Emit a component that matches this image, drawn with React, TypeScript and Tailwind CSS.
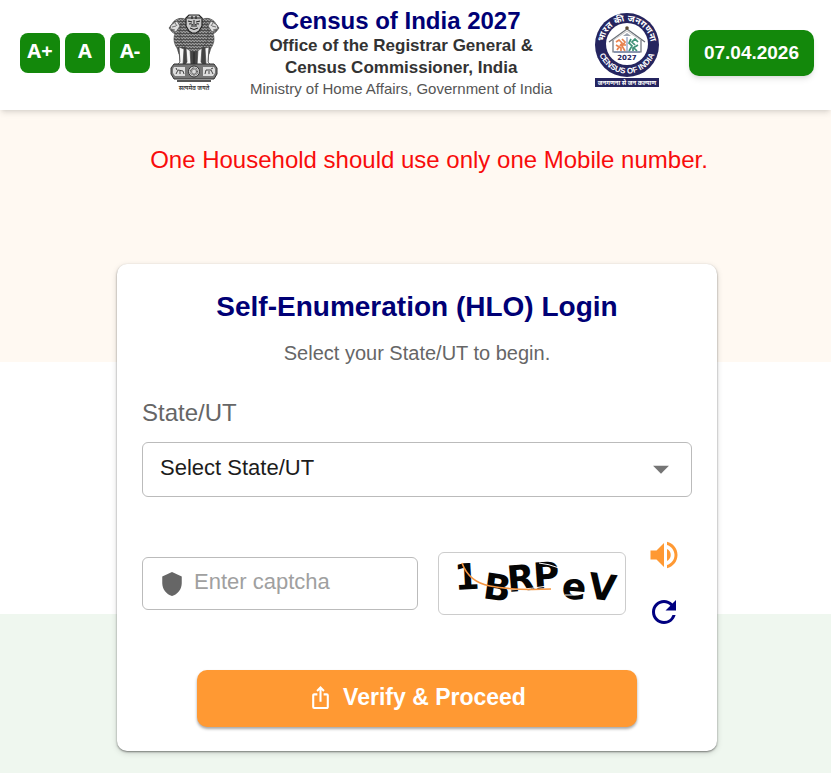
import React, { useState } from "react";
import {
    MdArrowDropDown,
    MdIosShare,
    MdRefresh,
    MdShield,
    MdVolumeUp,
} from "react-icons/md";

const FONT_SIZES = [
    { label: "A+", title: "Increase text size" },
    { label: "A", title: "Default text size" },
    { label: "A-", title: "Decrease text size" },
];

const STATES = ["Delhi", "Goa", "Karnataka", "Mizoram", "Odisha", "Sikkim"];

const CAPTCHA_GLYPHS = [
    { char: "1", x: 16, y: 37, rotate: -3 },
    { char: "B", x: 43, y: 45, rotate: 8 },
    { char: "R", x: 69, y: 39, rotate: -5 },
    { char: "P", x: 95, y: 36, rotate: -4 },
    { char: "e", x: 122, y: 45, rotate: 5 },
    { char: "V", x: 148, y: 45, rotate: 7 },
];

const StateEmblem: React.FC = () => (
    <svg
        className="h-20 w-[52px] shrink-0"
        viewBox="0 0 52 80"
        role="img"
        aria-label="State Emblem of India"
    >
        <defs>
            <pattern id="mane" width="3" height="3" patternUnits="userSpaceOnUse">
                <rect width="3" height="3" fill="#5c5c5c" />
                <path d="M0 1q.8-1 1.500 0t1.500 0" stroke="#cfcfcf" strokeWidth=".8" fill="none" />
                <path d="M-.5 2.500q.8-1 1.500 0t1.500 0" stroke="#222" strokeWidth=".5" fill="none" />
            </pattern>
        </defs>
        {/* Side lions */}
        <path d="M17 6C11 4 6 7 4 11L1 15l3 4 3 2c-2 4-1 10 2 14l2 6h8V9z" fill="url(#mane)" stroke="#444" strokeWidth=".6" />
        <path d="M35 6c6-2 11 1 13 5l3 4-3 4-3 2c2 4 1 10-2 14l-2 6h-8V9z" fill="url(#mane)" stroke="#444" strokeWidth=".6" />
        <path d="M3 12l6-4 3 5-4 6-6-3zM49 12l-6-4-3 5 4 6 6-3z" fill="#ddd" stroke="#555" strokeWidth=".8" />
        <path d="M4 14l4-1M3 16l4 1M7 10l2 3M48 14l-4-1M49 16l-4 1M45 10l-2 3" stroke="#444" strokeWidth=".7" />
        {/* Legs */}
        <path d="M10 34h32l-2 18H12z" fill="#444" />
        <path d="M11 34l1 15-3 3h6l1-16zM18 35l1 14-3 4h7l-1-17zM30 36l-1 17h7l-3-4 1-14zM37 35l1 17h5l-3-3 1-15z" fill="#f5f5f5" stroke="#444" strokeWidth=".7" />
        <path d="M26 36v16" stroke="#333" strokeWidth="2" />
        {/* Centre lion */}
        <path d="M18 5c-5 5-7 11-6 18 1 8 6 14 14 16 8-2 13-8 14-16 1-7-1-13-6-18z" fill="url(#mane)" stroke="#444" strokeWidth=".6" />
        <path d="M18 5l3-3h10l3 3v8l-3 5-3 2h-4l-3-2-3-5z" fill="#c9c9c9" stroke="#222" strokeWidth="1.200" />
        <path d="M19 5h14M20 8l4 1M32 8l-4 1M24 3v3M28 3v3" stroke="#222" strokeWidth="1.200" />
        <path d="M26 7v5M23 13h6M22 15q4 3 8 0M21 11q2-1 4 1M31 11q-2-1-4 1" stroke="#222" fill="none" />
        {/* Abacus */}
        <path d="M6 51h40l3 4v6l-3 5H6l-3-5v-6z" fill="#777" stroke="#333" />
        <path d="M6 54h11v9H7l-2-3v-4zM35 54h11l1 2v4l-2 3H35z" fill="#ddd" />
        <path d="M8 61l2-4 5 1 1 3M9 57l-1-2M37 61l1-4h5l2 4M43 56l2-1M12 58v3M41 58v3" stroke="#444" fill="none" />
        <circle cx="26" cy="58.500" r="5.500" fill="#ddd" stroke="#333" />
        <circle cx="26" cy="58.500" r="3" fill="none" stroke="#555" strokeWidth="2.400" strokeDasharray=".7 .5" />
        <path d="M9 67h34v2H9z" fill="#555" />
        <text
            x="26"
            y="77"
            textAnchor="middle"
            fontSize="6"
            fontWeight="600"
            fill="#333"
            className="font-['Noto_Sans_Devanagari','Noto_Sans',sans-serif]"
        >
            सत्यमेव जयते
        </text>
    </svg>
);

const CensusLogo: React.FC = () => (
    <svg
        className="mb-[6px] h-[76px] w-[66px] shrink-0"
        viewBox="0 0 66 76"
        role="img"
        aria-label="Census of India 2027"
    >
        <defs>
            <path id="arcTop" d="M9.500 33A23.500 23.500 0 0 1 56.500 33" />
            <path id="arcBottom" d="M3.500 32A29.500 29.500 0 0 0 62.500 32" />
        </defs>
        <circle cx="33" cy="33" r="32" fill="#25255f" />
        <circle cx="33" cy="32" r="21" fill="#fff" />
        <text
            fill="#fff"
            fontSize="9"
            fontWeight="700"
            textAnchor="middle"
            className="font-['Noto_Sans_Devanagari','Noto_Sans',sans-serif]"
        >
            <textPath href="#arcTop" startOffset="50%">
                भारत की जनगणना
            </textPath>
        </text>
        <text
            fill="#fff"
            fontSize="8"
            fontWeight="700"
            textAnchor="middle"
            className="font-['Liberation_Sans',sans-serif]"
        >
            <textPath href="#arcBottom" startOffset="50%">
                CENSUS OF INDIA
            </textPath>
        </text>
        {/* House */}
        <path d="M15 30l18-13 18 13M19 28v12h28V28" fill="none" stroke="#6b7078" strokeWidth="1.200" />
        <path d="M18 29l15-10 15 10" fill="none" stroke="#aaa" strokeWidth=".7" />
        <circle cx="33" cy="16" r="1.800" fill="#5b4b35" />
        <path d="M33 21l-4 3h8z" fill="#9ca3af" />
        <g fill="none" strokeWidth="1.700">
            <path d="M22 30l3-2 3 3-2 3M22 33l5 3v3M23 38l2-3M28 27l3 3-3 4 3 5M29 33h3" stroke="#e8834f" />
            <path d="M44 30l-3-3-3 3 3 3M44 33l-5 3v3M43 39l-3-3M37 27l-2 4 3 3-3 5" stroke="#3f9277" />
        </g>
        <path d="M33 25v14M20 40h26" stroke="#4963a0" strokeWidth=".8" />
        <text
            x="33"
            y="48"
            textAnchor="middle"
            fontSize="7"
            fontWeight="700"
            fill="#25255f"
            className="font-['DejaVu_Sans',sans-serif]"
        >
            2027
        </text>
        <path d="M1 66h64v9H1z" fill="#25255f" />
        <text
            x="33"
            y="73"
            textAnchor="middle"
            fontSize="6"
            fontWeight="700"
            fill="#fff"
            className="font-['Noto_Sans_Devanagari','Noto_Sans',sans-serif]"
        >
            जनगणना से जन कल्याण
        </text>
    </svg>
);

const CaptchaImage: React.FC = () => (
    <svg
        className="block h-[61px] w-full"
        viewBox="0 0 186 61"
        role="img"
        aria-label="Captcha"
    >
        <g
            fontSize="36"
            fontWeight="700"
            fill="#050505"
            className="font-['DejaVu_Sans',sans-serif]"
        >
            {CAPTCHA_GLYPHS.map(({ char, x, y, rotate }) => (
                <text key={char} x={x} y={y} transform={`rotate(${rotate} ${x} ${y})`}>
                    {char}
                </text>
            ))}
        </g>
        {/* Noise strokes */}
        <path d="M70 37q22-1 46-5M100 10q10 1 20 5M126 42q8 1 20-2" fill="none" stroke="#fff" strokeWidth="1" />
        <path d="M23 10c4 11 12 20 28 23 20 4 38 4 61 3" fill="none" stroke="#f5953f" strokeWidth="1.600" />
    </svg>
);

const Header: React.FC = () => (
    <header className="relative flex h-[110px] items-center bg-white pt-1 pr-[17px] pb-2 pl-5 shadow-md">
        <div className="flex gap-[5px]">
            {FONT_SIZES.map(({ label, title }) => (
                <button
                    key={label}
                    type="button"
                    title={title}
                    className="h-10 w-10 rounded-lg bg-[#13880b] pb-1 font-['Noto_Sans',sans-serif] text-xl leading-6 font-bold text-white"
                >
                    {label}
                </button>
            ))}
        </div>

        <div className="flex flex-1 items-center justify-between pr-[29px] pl-[18px]">
            <div className="flex items-center gap-[30px]">
                <StateEmblem />
                <div className="text-center whitespace-nowrap">
                    <h1 className="text-2xl leading-7 font-bold text-[#000075]">
                        Census of India 2027
                    </h1>
                    <p className="text-[17px] leading-[22px] font-bold text-[#333]">
                        Office of the Registrar General &amp;
                        <br />
                        Census Commissioner, India
                    </p>
                    <p className="text-[15px] leading-5 text-[#555]">
                        Ministry of Home Affairs, Government of India
                    </p>
                </div>
            </div>
            <CensusLogo />
        </div>

        <div className="rounded-[10px] bg-[#13880b] px-[15px] py-[9px] text-[19px] leading-7 font-bold text-white shadow-md">
            07.04.2026
        </div>
    </header>
);

const LoginCard: React.FC = () => {
    const [region, setRegion] = useState("");
    const [captcha, setCaptcha] = useState("");

    return (
        <form
            onSubmit={(e) => e.preventDefault()}
            className="mx-auto w-full max-w-[600px] rounded-[10px] bg-white px-[25px] pt-[25px] pb-6 shadow-[0_1px_2px_rgba(0,0,0,0.45),0_2px_6px_rgba(0,0,0,0.15)]"
        >
            <h2 className="text-center text-[28px] leading-9 font-bold text-[#000075]">
                Self-Enumeration (HLO) Login
            </h2>
            <p className="mt-4 text-center text-xl leading-6 text-[#666]">
                Select your State/UT to begin.
            </p>

            <label
                htmlFor="region"
                className="mt-[34px] block text-2xl leading-7 text-[#666]"
            >
                State/UT
            </label>
            <div className="relative mt-[15px]">
                <select
                    id="region"
                    value={region}
                    onChange={(e) => setRegion(e.target.value)}
                    className="h-[55px] w-full appearance-none rounded-md border border-[#bbb] bg-white px-[17px] pb-1 text-[22px] text-[#1c1c1c]"
                >
                    <option value="">Select State/UT</option>
                    {STATES.map((state) => (
                        <option key={state}>{state}</option>
                    ))}
                </select>
                <MdArrowDropDown
                    size={38}
                    className="pointer-events-none absolute top-2 right-3 text-[#757575]"
                />
            </div>

            {/* Captcha */}
            <div className="mt-10 flex items-center">
                <div className="flex h-[53px] min-w-0 flex-1 items-center gap-[9px] rounded-md border border-[#bbb] pl-4">
                    <MdShield size={26} className="shrink-0 text-[#666]" />
                    <input
                        type="text"
                        aria-label="Enter captcha"
                        placeholder="Enter captcha"
                        value={captcha}
                        onChange={(e) => setCaptcha(e.target.value)}
                        className="w-full min-w-0 pb-1 text-[22px] text-[#1c1c1c] outline-none placeholder:text-[#a0a0a0]"
                    />
                </div>
                <div className="ml-5 w-[188px] rounded-md border border-[#ccc] bg-white">
                    <CaptchaImage />
                </div>
                <div className="mr-[10px] ml-5 flex flex-col gap-[21px]">
                    <button type="button" aria-label="Play captcha audio">
                        <MdVolumeUp size={36} className="text-[#ff9933]" />
                    </button>
                    <button type="button" aria-label="Refresh captcha">
                        <MdRefresh size={36} className="text-[#000080]" />
                    </button>
                </div>
            </div>

            <button
                type="submit"
                className="mx-auto mt-10 flex h-[57px] w-4/5 items-center justify-center gap-[10px] rounded-[10px] bg-[#ff9933] pb-[3px] text-[23px] font-bold text-white shadow-[0_2px_3px_rgba(0,0,0,0.35)]"
            >
                <MdIosShare size={25} />
                Verify &amp; Proceed
            </button>
        </form>
    );
};

const App: React.FC = () => {
    return (
        <div className="flex min-h-screen flex-col font-['Liberation_Sans',Arial,sans-serif]">
            <Header />
            <main className="flex-1 bg-[linear-gradient(to_bottom,#fff9f2_38%,#ffffff_38%,#ffffff_76%,#eff7ef_76%)] pb-[22px] pl-[3px]">
                <p className="pt-9 pl-6 text-center text-2xl leading-7 text-[#f80c0c]">
                    One Household should use only one Mobile number.
                </p>
                <div className="pt-[90px]">
                    <LoginCard />
                </div>
            </main>
        </div>
    );
};

export default App;
